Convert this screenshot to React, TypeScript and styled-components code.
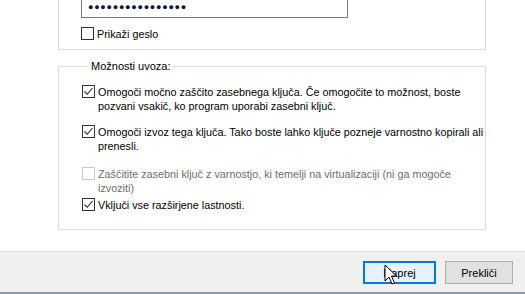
import React from 'react';
import styled, { createGlobalStyle } from 'styled-components';

const GlobalStyle = createGlobalStyle`
  html, body {
    margin: 0;
    padding: 0;
    background: #ffffff;
  }
  body {
    font-family: 'Liberation Sans', Arial, sans-serif;
    font-size: 11px;
    color: #000000;
  }
`;

const Page = styled.div`
  width: 525px;
  height: 294px;
  display: flex;
  flex-direction: column;
  overflow: hidden;
  position: relative;
`;

const Content = styled.div`
  flex: 1;
  display: flex;
  flex-direction: column;
  padding-left: 58px;
  width: 428px;
`;

const PasswordBox = styled.div`
  margin-top: -6px;
  border: 1px solid #d9d9d9;
  border-top: none;
  padding: 0 0 8px 22px;
  display: flex;
  flex-direction: column;
  gap: 9px;
`;

const PasswordInput = styled.div`
  width: 267px;
  height: 24px;
  box-sizing: border-box;
  border: 1px solid #7a7a7a;
  display: flex;
  align-items: center;
  padding-left: 6px;
  padding-top: 1px;
  font-size: 9px;
  letter-spacing: 0.75px;
  color: #0b1430;
`;

const Group = styled.fieldset`
  margin: 10px 0 0 0;
  padding: 0 0 17px 23px;
  border: 1px solid #dcdcdc;
  min-width: 0;
  display: flex;
  flex-direction: column;
`;

const Legend = styled.legend`
  margin-left: 6px;
  padding: 0 3px;
  line-height: 13px;
`;

const Row = styled.label<{ $top: number; $disabled?: boolean }>`
  display: flex;
  align-items: flex-start;
  gap: 3px;
  margin-top: ${(p) => p.$top}px;
  line-height: 14px;
  color: ${(p) => (p.$disabled ? '#6d6d6d' : '#000000')};
`;

const Box = styled.span<{ $disabled?: boolean }>`
  flex: none;
  width: 13px;
  height: 13px;
  box-sizing: border-box;
  border: 1px solid ${(p) => (p.$disabled ? '#c8c8c8' : '#333333')};
  background: #ffffff;
  display: flex;
  align-items: center;
  justify-content: center;
`;

const Text = styled.span`
  display: flex;
  flex-direction: column;
  font-size: 10.8px;
  white-space: nowrap;
`;

const Footer = styled.div`
  height: 43px;
  box-sizing: border-box;
  background: #f0f0f0;
  border-top: 1px solid #e3e3e3;
  border-bottom: 2px solid #8c99ab;
  display: flex;
  justify-content: flex-end;
  align-items: flex-start;
  padding: 9px 12px 0 0;
  gap: 9px;
`;

const Button = styled.button<{ $primary?: boolean; $w: number }>`
  width: ${(p) => p.$w}px;
  height: 23px;
  box-sizing: border-box;
  font-family: 'Liberation Sans', Arial, sans-serif;
  font-size: 11px;
  color: #000000;
  background: ${(p) => (p.$primary ? '#e5f1fb' : '#e1e1e1')};
  border: ${(p) => (p.$primary ? '2px solid #0078d7' : '1px solid #adadad')};
  padding: 0;
`;

const Cursor = styled.svg`
  position: absolute;
  left: 384px;
  top: 264px;
`;

const Check = () => (
  <svg width="11" height="11" viewBox="0 0 11 11">
    <path d="M1.5 5.5 L4.2 8.3 L9.5 2" fill="none" stroke="#222" strokeWidth="1.1" />
  </svg>
);

type Opt = { lines: string[]; checked: boolean; disabled?: boolean; top: number };

const options: Opt[] = [
  {
    lines: [
      'Omogoči močno zaščito zasebnega ključa. Če omogočite to možnost, boste',
      'pozvani vsakič, ko program uporabi zasebni ključ.',
    ],
    checked: true,
    top: 12,
  },
  {
    lines: ['Omogoči izvoz tega ključa. Tako boste lahko ključe pozneje varnostno kopirali ali', 'prenesli.'],
    checked: true,
    top: 12,
  },
  {
    lines: ['Zaščitite zasebni ključ z varnostjo, ki temelji na virtualizaciji (ni ga mogoče', 'izvoziti)'],
    checked: false,
    disabled: true,
    top: 14,
  },
  { lines: ['Vključi vse razširjene lastnosti.'], checked: true, top: 3 },
];

export default function App() {
  return (
    <Page>
      <GlobalStyle />
      <Content>
        <PasswordBox>
          <PasswordInput>{'●'.repeat(16)}</PasswordInput>
          <Row $top={0}>
            <Box />
            <Text>Prikaži geslo</Text>
          </Row>
        </PasswordBox>
        <Group>
          <Legend>Možnosti uvoza:</Legend>
          {options.map((o) => (
            <Row key={o.lines[0]} $top={o.top} $disabled={o.disabled}>
              <Box $disabled={o.disabled}>{o.checked && <Check />}</Box>
              <Text>
                {o.lines.map((l) => (
                  <span key={l}>{l}</span>
                ))}
              </Text>
            </Row>
          ))}
        </Group>
      </Content>
      <Footer>
        <Button $primary $w={73}>
          Naprej
        </Button>
        <Button $w={68}>Prekliči</Button>
      </Footer>
      <Cursor width="14" height="22" viewBox="0 0 14 22">
        <path d="M1 1 L1 17 L5 13 L8 20 L10.5 19 L7.5 12 L12.5 12 Z" fill="#fff" stroke="#000" strokeWidth="1" />
      </Cursor>
    </Page>
  );
}
